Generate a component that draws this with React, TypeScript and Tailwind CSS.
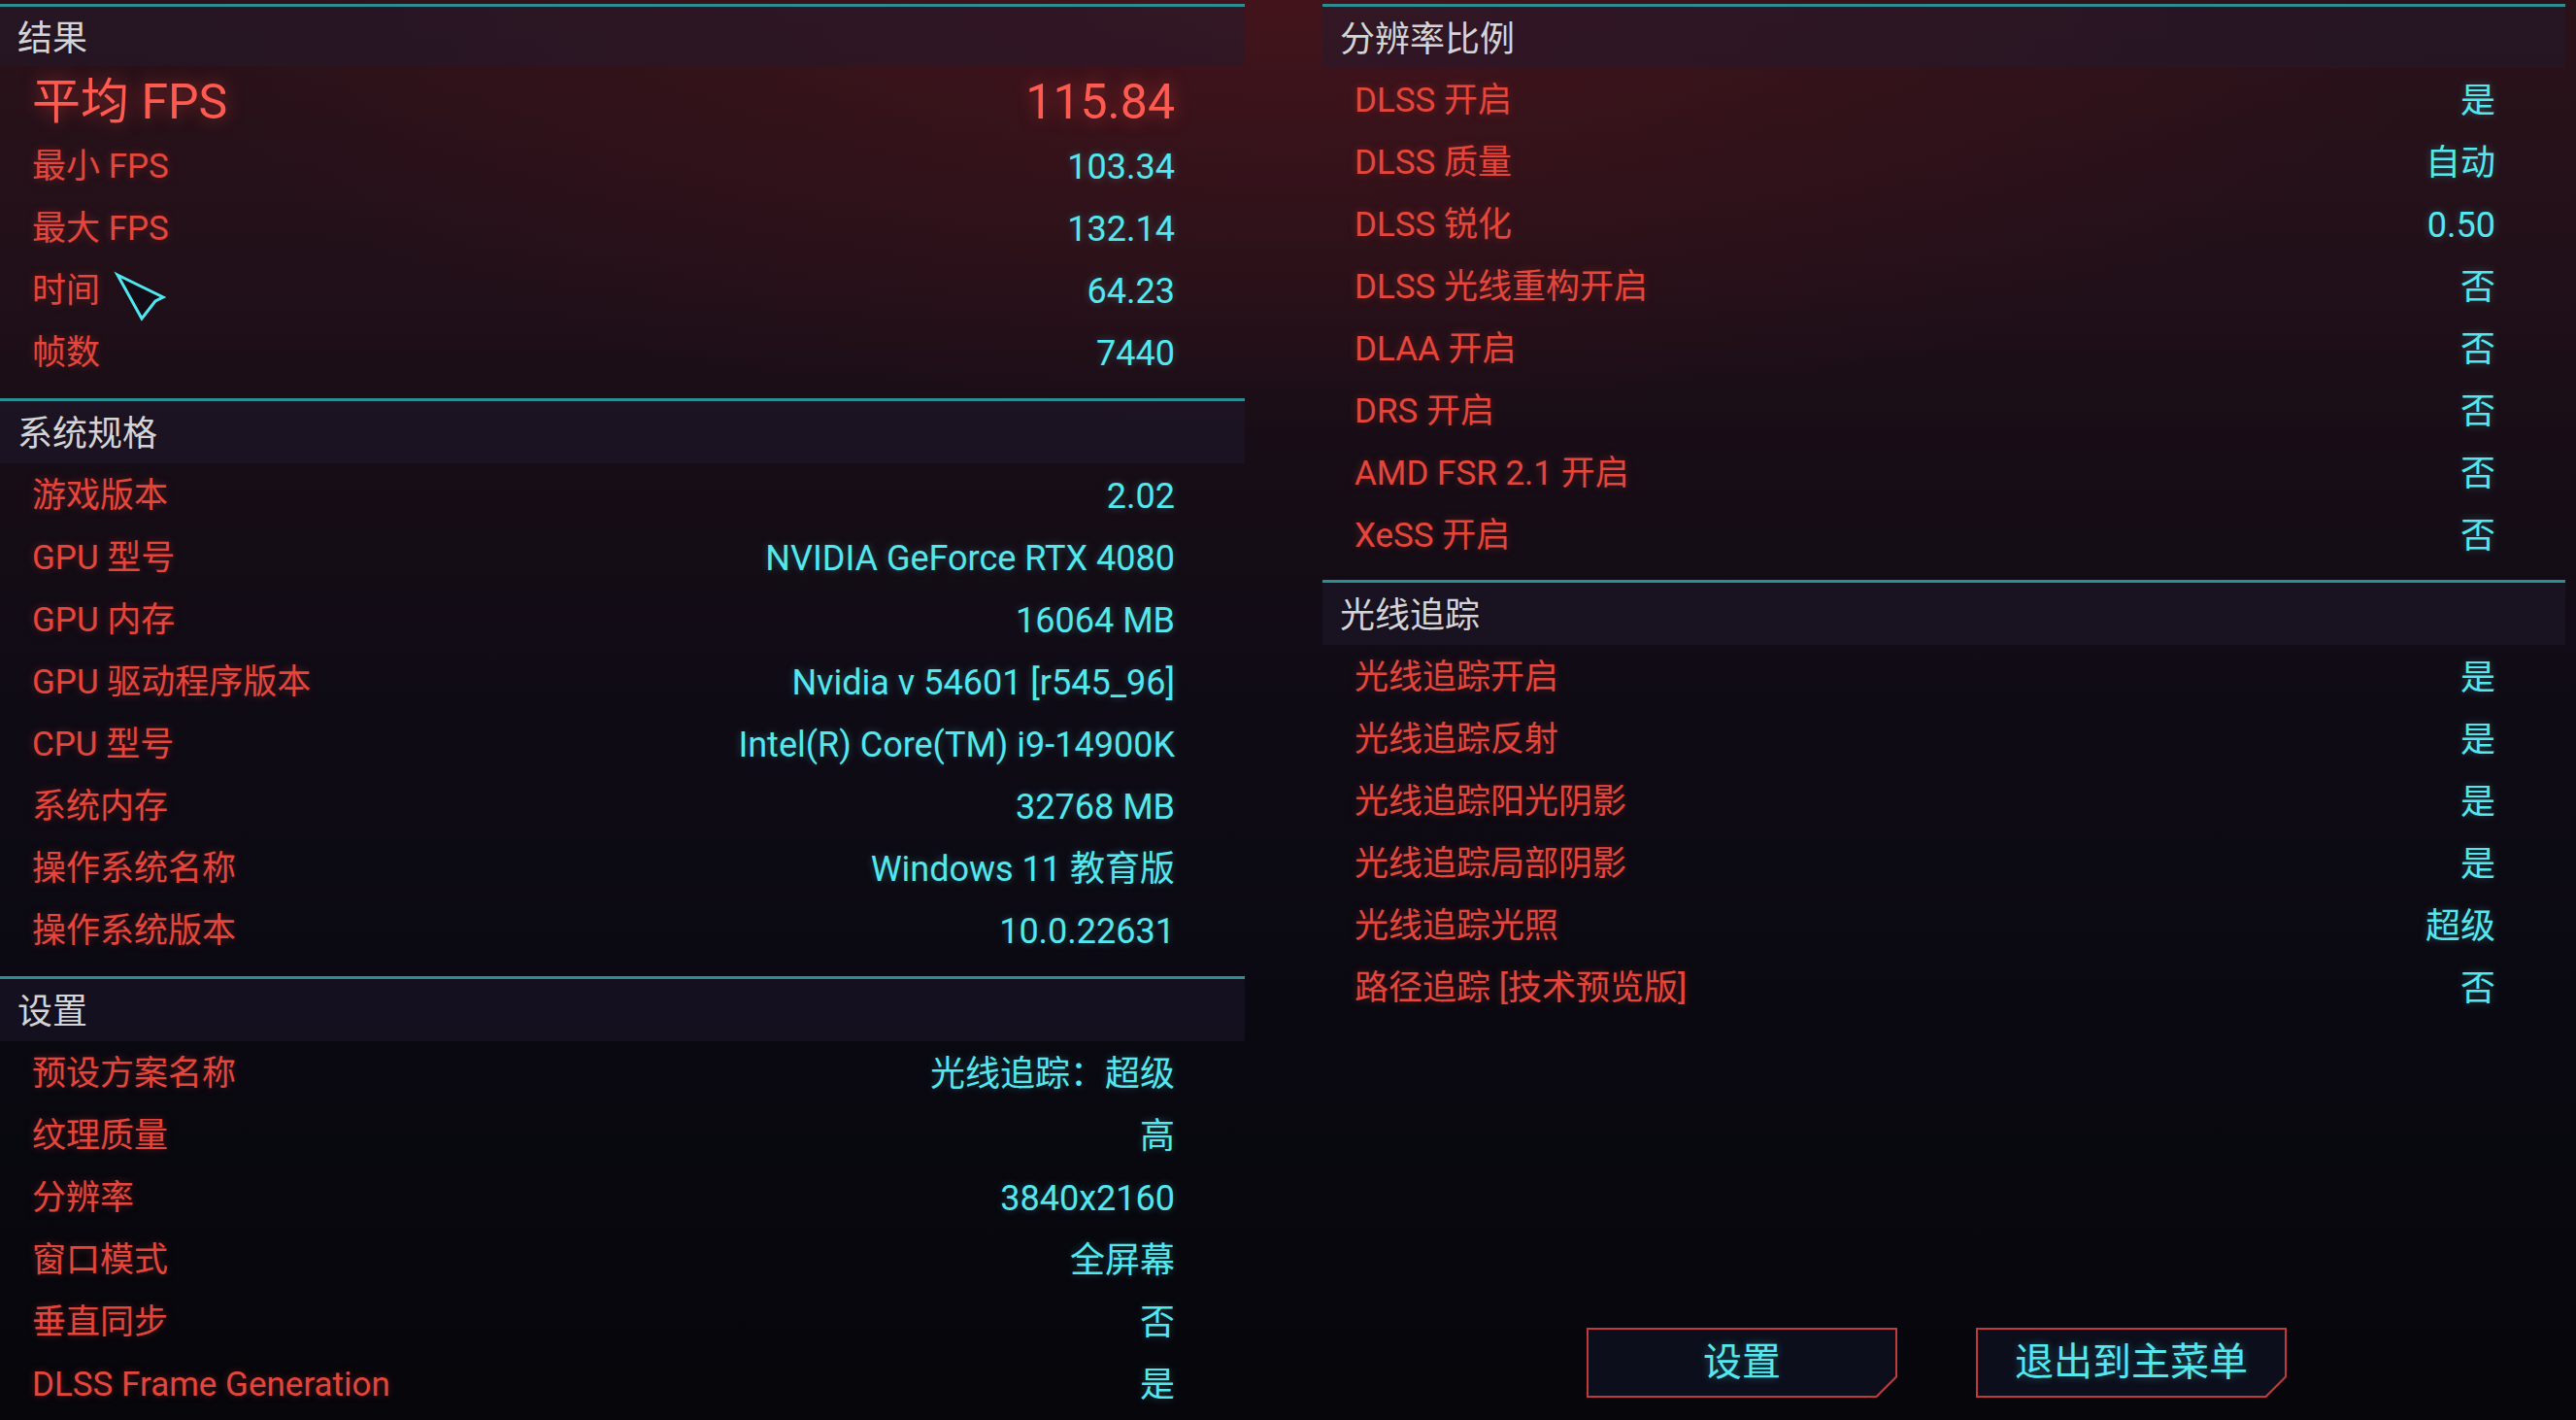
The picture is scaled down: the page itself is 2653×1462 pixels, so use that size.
import React from "react";

type Row = [string, string];

const results: Row[] = [
  ["最小 FPS", "103.34"],
  ["最大 FPS", "132.14"],
  ["时间", "64.23"],
  ["帧数", "7440"],
];

const specs: Row[] = [
  ["游戏版本", "2.02"],
  ["GPU 型号", "NVIDIA GeForce RTX 4080"],
  ["GPU 内存", "16064 MB"],
  ["GPU 驱动程序版本", "Nvidia v 54601 [r545_96]"],
  ["CPU 型号", "Intel(R) Core(TM) i9-14900K"],
  ["系统内存", "32768 MB"],
  ["操作系统名称", "Windows 11 教育版"],
  ["操作系统版本", "10.0.22631"],
];

const settings: Row[] = [
  ["预设方案名称", "光线追踪：超级"],
  ["纹理质量", "高"],
  ["分辨率", "3840x2160"],
  ["窗口模式", "全屏幕"],
  ["垂直同步", "否"],
  ["DLSS Frame Generation", "是"],
];

const scaling: Row[] = [
  ["DLSS 开启", "是"],
  ["DLSS 质量", "自动"],
  ["DLSS 锐化", "0.50"],
  ["DLSS 光线重构开启", "否"],
  ["DLAA 开启", "否"],
  ["DRS 开启", "否"],
  ["AMD FSR 2.1 开启", "否"],
  ["XeSS 开启", "否"],
];

const rt: Row[] = [
  ["光线追踪开启", "是"],
  ["光线追踪反射", "是"],
  ["光线追踪阳光阴影", "是"],
  ["光线追踪局部阴影", "是"],
  ["光线追踪光照", "超级"],
  ["路径追踪 [技术预览版]", "否"],
];

function Line() {
  return <div className="h-[3px] bg-[#2b8e94] shrink-0" />;
}

function Header({ title, h }: { title: string; h: string }) {
  return (
    <div
      className={`${h} shrink-0 flex items-center pl-[18px] pt-[4px] bg-[#221b30]/45 text-[36px] leading-none text-[#d4d4d6]`}
    >
      {title}
    </div>
  );
}

function DataRow({ label, value }: { label: string; value: string }) {
  return (
    <div className="h-[64px] shrink-0 flex items-center justify-between pl-[33px] pr-[72px] pt-[3px] text-[35px] leading-none">
      <span className="text-[#e4463c] [text-shadow:0_0_8px_rgba(228,60,50,0.35)]">{label}</span>
      <span className="text-[#55e7ee] text-[36px] [text-shadow:0_0_8px_rgba(80,230,240,0.3)]">{value}</span>
    </div>
  );
}

function CutButton({ label }: { label: string }) {
  return (
    <div className="w-[320px] h-[72px] p-[2px] bg-[#c2393b] [clip-path:polygon(0_0,100%_0,100%_calc(100%_-_21px),calc(100%_-_21px)_100%,0_100%)]">
      <div className="w-full h-full flex items-center justify-center bg-[#0c0e1b] text-[40px] leading-none text-[#55e7ee] [text-shadow:0_0_8px_rgba(80,230,240,0.35)] [clip-path:polygon(0_0,100%_0,100%_calc(100%_-_20px),calc(100%_-_20px)_100%,0_100%)]">
        {label}
      </div>
    </div>
  );
}

export default function App() {
  return (
    <div className="relative w-[2653px] h-[1462px] overflow-hidden flex gap-[80px] font-['Roboto','Noto_Sans_CJK_SC',sans-serif] bg-[radial-gradient(ellipse_45%_30%_at_50%_0%,rgba(95,22,28,0.45),transparent),linear-gradient(180deg,#2b1219_0%,#221019_18%,#170d16_32%,#0f0b15_50%,#0a0911_72%,#06060b_100%)]">
      {/* Left column */}
      <div className="w-[1282px] shrink-0 flex flex-col pt-[4px]">
        <Line />
        <Header title="结果" h="h-[61px]" />
        <div className="h-[70px] shrink-0 flex items-center justify-between pl-[33px] pr-[72px] pt-[3px] text-[50px] leading-none text-[#ff5a4f] [text-shadow:0_0_18px_rgba(255,70,60,0.5)]">
          <span>平均 FPS</span>
          <span>115.84</span>
        </div>
        {results.map(([l, v]) => (
          <DataRow key={l} label={l} value={v} />
        ))}
        <div className="h-[16px] shrink-0" />
        <Line />
        <Header title="系统规格" h="h-[64px]" />
        {specs.map(([l, v]) => (
          <DataRow key={l} label={l} value={v} />
        ))}
        <div className="h-[16px] shrink-0" />
        <Line />
        <Header title="设置" h="h-[64px]" />
        {settings.map(([l, v]) => (
          <DataRow key={l} label={l} value={v} />
        ))}
      </div>

      {/* Right column */}
      <div className="w-[1280px] shrink-0 flex flex-col pt-[4px]">
        <Line />
        <Header title="分辨率比例" h="h-[63px]" />
        {scaling.map(([l, v]) => (
          <DataRow key={l} label={l} value={v} />
        ))}
        <div className="h-[15px] shrink-0" />
        <Line />
        <Header title="光线追踪" h="h-[64px]" />
        {rt.map(([l, v]) => (
          <DataRow key={l} label={l} value={v} />
        ))}
        <div className="mt-auto mb-[23px] flex gap-[81px] pl-[272px]">
          <CutButton label="设置" />
          <CutButton label="退出到主菜单" />
        </div>
      </div>

      {/* Mouse cursor overlay */}
      <svg
        className="absolute left-[115px] top-[278px]"
        width="60"
        height="56"
        viewBox="0 0 60 56"
      >
        <polygon
          points="6,5 53,28 45,32 31,50"
          fill="rgba(14,10,22,0.7)"
          stroke="#4fe8f0"
          strokeWidth="3"
          strokeLinejoin="miter"
        />
      </svg>
    </div>
  );
}
